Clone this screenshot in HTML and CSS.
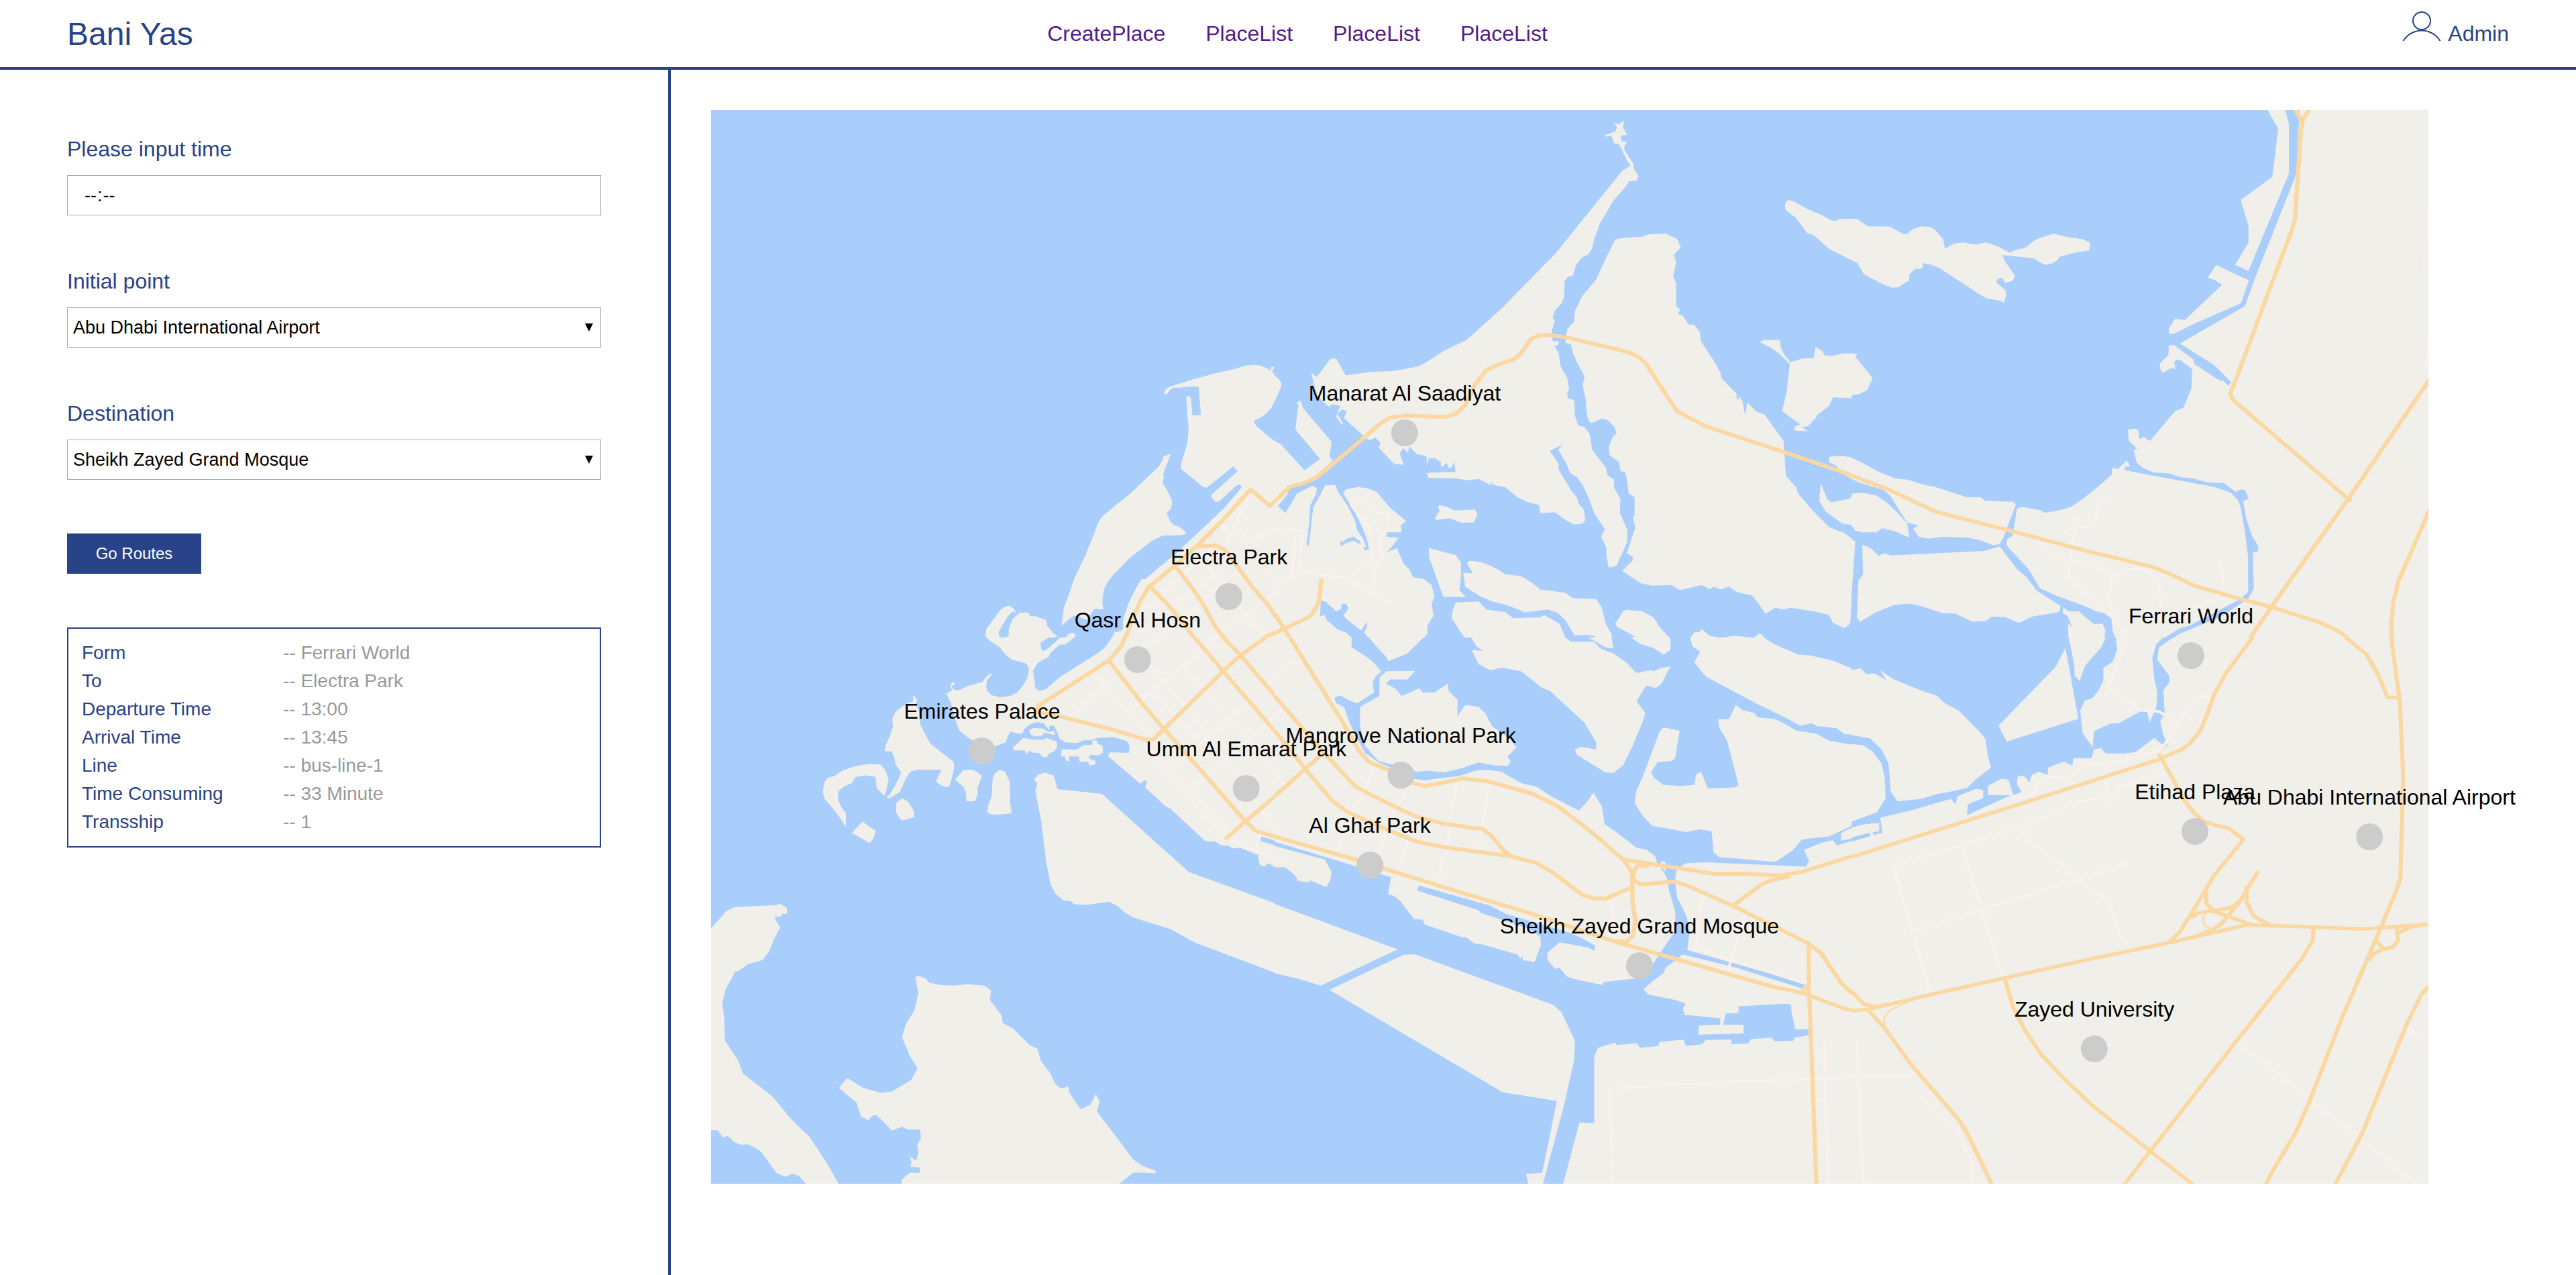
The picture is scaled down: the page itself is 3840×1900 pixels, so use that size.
FILE: index.html
```html
<!DOCTYPE html>
<html lang="en">
<head>
<meta charset="utf-8">
<meta name="viewport" content="width=device-width, initial-scale=1">
<title>Bani Yas</title>
<link rel="stylesheet" href="styles.css">
</head>
<body>
<header class="topbar">
  <h1 class="brand">Bani Yas</h1>
  <nav class="nav">
    <a href="#create">CreatePlace</a>
    <a href="#list">PlaceList</a>
    <a href="#list">PlaceList</a>
    <a href="#list">PlaceList</a>
  </nav>
  <a class="account" href="#admin">
    <svg class="account-icon" viewBox="0 0 60 44" aria-hidden="true"><circle cx="30" cy="14" r="13"/><path d="M2 45A32 32 0 0 1 58 45"/></svg>
    <span>Admin</span>
  </a>
</header>

<main class="layout">
  <section class="sidebar">
    <form class="form">
      <div class="field">
        <label for="time">Please input time</label>
        <input class="control time" id="time" type="time">
      </div>
      <div class="field">
        <label for="from">Initial point</label>
        <div class="select">
          <select class="control" id="from">
            <option>Abu Dhabi International Airport</option>
            <option>Ferrari World</option>
            <option>Electra Park</option>
          </select>
        </div>
      </div>
      <div class="field">
        <label for="to">Destination</label>
        <div class="select">
          <select class="control" id="to">
            <option>Sheikh Zayed Grand Mosque</option>
            <option>Ferrari World</option>
            <option>Electra Park</option>
          </select>
        </div>
      </div>
      <button class="go" type="button">Go Routes</button>
    </form>
    <dl class="result">
      <dt>Form</dt><dd>-- Ferrari World</dd>
      <dt>To</dt><dd>-- Electra Park</dd>
      <dt>Departure Time</dt><dd>-- 13:00</dd>
      <dt>Arrival Time</dt><dd>-- 13:45</dd>
      <dt>Line</dt><dd>-- bus-line-1</dd>
      <dt>Time Consuming</dt><dd>-- 33 Minute</dd>
      <dt>Transship</dt><dd>-- 1</dd>
    </dl>
  </section>

  <section class="map-pane">
    <div class="map">
      <svg class="map-art" viewBox="0 0 2560 1600" role="img" aria-label="Map of Abu Dhabi">
        <rect class="water" width="2560" height="1600"/>

        <!-- north-west tile -->
        <svg x="-20" y="-14" width="900" height="820" viewBox="0 0 1568 1568" preserveAspectRatio="none">
          <rect class="water" width="1568" height="1568"/>
          <g class="land">
            <path d="M1216 822L1228 814L1290 793L1345 777L1390 766L1425 755L1447 753L1462 755L1480 764L1488 768L1489 760L1495 757L1498 761L1492 768L1494 776L1508 790L1517 803L1515 816L1508 834L1500 852L1490 875L1475 893L1462 903L1448 910L1445 915L1450 926L1480 954L1508 978L1515 981L1540 1010L1568 1044V1568H1046L1060 1552L1075 1532L1083 1515L1097 1512L1105 1505L1104 1485L1110 1460L1120 1430L1138 1390L1152 1364L1163 1363L1195 1333L1240 1293L1268 1263L1330 1200L1370 1158L1410 1106L1413 1101L1408 1094L1400 1096L1354 1142L1344 1143L1334 1130L1335 1122L1402 1056L1391 1042L1322 1103L1313 1101L1256 1050L1254 1042L1262 1010L1272 975L1275 935L1271 885L1269 845L1275 841L1281 847L1285 897L1307 896L1301 816L1286 814L1250 818L1235 818L1228 823L1218 837L1212 836L1212 831Z"/>
            <path d="M1229 1006L1210 1014L1206 1027L1197 1043L1165 1076L1125 1118L1060 1176L1050 1186L1040 1202L1029 1236L1005 1300L978 1362L965 1405L951 1445L945 1497L965 1477L975 1469L985 1468L1010 1480L1030 1448L1048 1450L1054 1447L1051 1435L1052 1412L1057 1388L1066 1370L1080 1350L1095 1334L1120 1305L1155 1275L1182 1253L1208 1239L1255 1238L1265 1236L1269 1231L1262 1224L1250 1214L1235 1208L1226 1195L1218 1175L1229 1163L1232 1150L1231 1138L1220 1112L1208 1090L1208 1082L1211 1072L1209 1063Z"/>
            <path d="M828 1460L820 1446L808 1439L795 1443L785 1453L772 1472L750 1505L747 1520L750 1535L760 1548L780 1558L788 1568H895L890 1558L893 1550L915 1532L934 1527L922 1515L908 1497L905 1480L880 1470L862 1468L860 1460L850 1458L835 1460L818 1477L808 1505L808 1522L804 1528L790 1531L782 1525L782 1513L795 1488L805 1470L818 1455Z"/>
            <path d="M915 1568L930 1558L940 1533L942 1545L967 1517L980 1518L982 1525L965 1552L955 1556L950 1550L935 1568Z"/>
          </g>
          <g class="street">
            <path d="M1436 1118L1388 1225L1360 1275M1353 1207L1400 1235L1440 1285L1510 1385M1403 1215L1440 1255L1470 1232L1500 1222L1568 1224M1555 1225L1545 1350M1310 1300L1360 1385L1475 1532M1172 1445L1340 1270M1150 1515L1400 1300M1165 1560L1410 1335M1300 1568L1568 1345M1112 1530L1140 1568"/>
          </g>
          <g class="road">
            <path d="M1090 1568L1108 1540L1125 1490L1150 1425L1172 1385L1240 1325L1300 1265L1360 1200L1436 1108L1486 1155L1530 1110L1545 1095L1568 1091M1283 1278L1300 1271L1345 1267L1370 1280L1400 1325L1440 1385L1480 1435L1520 1500L1555 1568M1240 1325L1275 1375L1310 1430L1345 1500L1395 1568M1175 1385L1220 1435L1255 1480L1315 1568M1415 1568L1475 1528L1568 1480"/>
          </g>
        </svg>

        <!-- north tile -->
        <svg x="840" y="-14" width="900" height="820" viewBox="0 0 1568 1568" preserveAspectRatio="none">
          <rect class="water" width="1568" height="1568"/>
          <g class="land">
            <path d="M0 783L10 792L18 805L17 815L0 857Z"/>
            <path d="M0 970L15 978L78 1053L118 1021L54 937L62 866L57 860L68 855L73 875L148 972L143 1015L152 1025L105 1070L75 1085L30 1100L35 1120L9 1155L28 1175L58 1120L98 1097L110 1105L108 1120L92 1155L90 1200L83 1265L88 1270L92 1240L100 1160L130 1100L132 1095L158 1095L165 1115L190 1155L210 1200L215 1225L230 1248L238 1272L225 1272L222 1255L205 1242L188 1248L175 1258L170 1252L172 1270L182 1262L205 1254L225 1265L235 1282L245 1278L240 1250L225 1210L205 1165L178 1120L185 1108L215 1101L240 1104L265 1115L300 1160L342 1198L328 1210L330 1230L290 1230L292 1243L322 1245L305 1270L290 1287L318 1275L335 1320L350 1335L360 1358L385 1362L408 1380L415 1410L408 1435L413 1468L397 1495L397 1520L360 1560L350 1568H0Z"/>
            <path d="M858 98L868 94L885 88L889 75L880 62L893 68L908 57L905 75L915 97L898 100L903 118L915 115L907 137L932 180L932 192L945 215L940 228L920 230L912 245L880 285L845 350L830 395L825 420L815 438L798 447L782 470L775 498L762 502L753 515L752 560L745 578L728 598L722 618L728 628L720 655L722 685L738 685L737 695L727 700L738 720L742 755L760 790L765 820L760 835L762 848L778 853L780 897L788 925L805 930L818 950L825 995L860 1045L865 1068L882 1080L880 1098L898 1135L897 1175L917 1225L915 1260L888 1325L868 1331L862 1300L862 1275L848 1243L858 1222L830 1175L815 1130L800 1095L785 1072L768 1062L758 1035L737 995L748 980L715 998L738 1035L737 1050L770 1110L785 1130L790 1150L803 1165L807 1195L800 1205L780 1208L760 1198L728 1173L690 1175L687 1152L660 1145L630 1130L600 1102L570 1095L560 1083L566 1096L555 1092L530 1078L500 1082L470 1076L400 1075L395 1062L405 1060L470 1058L466 1028L460 1045L452 1047L448 1033L432 1045V1030L415 1018L400 1020L395 1040V1015L385 1010L370 1008L350 985L346 1004L335 990L325 1005L335 1038L310 1035L270 988L275 975L262 960L245 968L228 952L180 905L188 885L175 880L163 892L178 920L175 925L160 900L170 870L150 865L140 872L110 840L95 775L110 788L145 735L160 735L185 783L250 773L310 770L370 758L390 748L440 713L497 683L590 592L730 435L785 360L903 200L925 185L915 170L895 125L882 122L875 100L858 103Z"/>
            <path d="M885 395L915 390L955 388L970 381L1015 379L1045 393L1055 418L1037 440L1043 460L1035 500L1043 520L1043 585L1053 595L1048 608L1060 612L1075 638L1090 638L1105 660L1107 685L1140 740L1158 775L1160 790L1200 835L1200 850L1207 852L1205 840L1215 855L1222 897L1228 860L1250 885L1273 895L1322 970L1328 1070L1355 1102L1360 1120L1395 1165L1440 1215L1480 1232L1508 1256L1495 1490L1480 1503L1450 1488L1440 1465L1400 1455L1340 1445L1320 1450L1300 1445L1275 1462L1255 1430L1240 1410L1200 1400L1180 1385L1160 1393L1140 1385L1130 1392L1110 1380L1080 1388L1053 1395L1030 1380L980 1382L950 1375L903 1340L930 1310L930 1300L915 1290L937 1215L930 1187L935 1182L935 1130L920 1120L912 1060L898 1055L895 1030L870 1010L868 985L880 955L888 950L883 930L865 910L850 906L820 920L812 900L808 850L800 812L805 785L785 745L775 720L770 695L755 690L760 650L778 630L780 600L800 555L835 510L860 450Z"/>
            <path d="M428 1153L440 1155L470 1168L520 1165L527 1178L518 1202L485 1203L455 1190L420 1195L416 1190L428 1170L424 1157Z"/>
            <path d="M401 1275L470 1295L484 1315L484 1355L480 1395L497 1414L438 1414L401 1300Z"/>
            <path d="M500 1318L505 1312L520 1312L545 1318L575 1333L600 1350L640 1355L670 1375L690 1393L755 1402L775 1418L835 1420L850 1445L860 1490L875 1520L880 1565L860 1558L830 1525L795 1522L780 1525L755 1480L735 1460L710 1450L650 1458L610 1440L560 1425L530 1410L495 1385L490 1345L515 1347Z"/>
            <path d="M470 1430L530 1427L550 1450L600 1458L620 1475L690 1472L700 1466L740 1490L755 1530L770 1545L815 1540L860 1568H525L515 1555L490 1525L460 1475L462 1455Z"/>
            <path d="M885 1490L905 1455L915 1451L955 1455L985 1473L1000 1500L1028 1533V1568H980L960 1545L925 1520L890 1500Z"/>
            <path d="M1080 1530L1090 1515L1102 1515L1110 1507L1130 1525L1160 1530L1195 1525L1245 1530L1260 1517L1300 1555L1335 1568H1080Z"/>
            <path d="M1328 288L1335 283L1350 288L1385 310L1420 325L1445 341L1455 343L1470 337L1515 338L1540 357L1568 358V517L1532 498L1513 463L1440 422L1400 383L1383 377L1355 335L1328 312L1325 300Z"/>
            <path d="M1260 688L1270 682L1312 682L1315 705L1325 725L1340 745L1370 735L1400 733L1405 702L1422 713L1428 725L1450 728L1475 720L1500 720L1515 727L1510 732L1552 790L1540 825L1500 848L1450 845L1440 870L1410 895L1405 905L1385 928L1370 930L1385 942L1350 940L1350 930L1365 922L1318 885L1330 830L1338 750L1310 720L1290 705Z"/>
            <path d="M1440 1015L1470 1012L1510 1018L1568 1045V1105L1510 1085L1465 1057L1462 1042L1440 1030Z"/>
            <path d="M1418 1090L1435 1135L1445 1145L1490 1135L1525 1117L1568 1127V1230L1540 1230L1515 1212L1475 1205L1430 1170L1415 1140Z"/>
            <path d="M1527 1268L1568 1300V1455L1530 1470L1518 1485L1513 1475L1518 1370L1528 1355Z"/>
          </g>
          <path class="water" d="M120 1425L132 1427L160 1455L172 1450L175 1435L185 1433L192 1445L185 1460L178 1465L190 1480L225 1510L240 1485L240 1500L232 1515L272 1568H215L200 1530L185 1515L165 1508L135 1480L130 1465L118 1470Z"/>
          <g class="street">
            <path d="M0 1222L75 1225L60 1345M55 1225L45 1350M0 1390L65 1342L180 1358L260 1410L295 1427M190 1365L250 1305L255 1260L245 1215L200 1155L202 1135L212 1130L230 1137L270 1175L290 1180L297 1190L295 1215L272 1250L278 1300L258 1335L258 1410M0 1368L10 1388"/>
          </g>
          <g class="road">
            <path d="M0 1142L40 1100L75 1090L110 1073L190 1000L275 920L300 903L345 897L440 902L470 893L495 868L520 810L550 768L585 750L620 738L640 720L665 680L685 670L710 667L760 675L920 717L945 730L965 750L1000 810L1045 885L1120 928L1300 993L1480 1060L1568 1100M122 1362L115 1430L95 1468L0 1518M0 1462L25 1505L60 1568"/>
          </g>
        </svg>

        <!-- north-east tile -->
        <svg x="1700" y="-14" width="900" height="820" viewBox="0 0 1568 1568" preserveAspectRatio="none">
          <rect class="water" width="1568" height="1568"/>
          <g class="land">
            <path d="M0 337L15 337L42 358L100 359L135 380L145 380L158 367L180 358L205 360L217 368L238 395L243 422L265 408L290 404L320 410L350 404L380 415L410 433L430 424L450 420L480 395L525 379L560 388L600 395L620 405L617 427L580 433L540 445L535 455L520 464L505 468L490 462L475 450L392 440L400 460L424 498L420 512L400 520L392 505L380 508L376 518L400 540L402 555L396 576L385 570L350 563L330 550L230 478L205 467L185 463L185 478L165 480L150 495L150 512L120 532L105 533L85 525L32 495L15 462L0 455Z"/>
            <path d="M0 720L15 722L10 730L55 790L45 815L40 825L20 836L0 840Z"/>
            <path d="M0 1018L25 1030L70 1057L115 1077L145 1080L190 1095L215 1100L300 1130L335 1130L347 1140L420 1143L427 1150L395 1245L385 1264L368 1267L335 1253L300 1245L235 1243L200 1248L175 1243L160 1220L175 1210L145 1203L100 1125L85 1110L20 1088L0 1078Z"/>
            <path d="M0 1120L30 1117L65 1125L97 1150L120 1175L145 1205L150 1245L115 1228L80 1218L65 1230L30 1230L10 1225L0 1210Z"/>
            <path d="M0 1250L10 1256L0 1410Z"/>
            <path d="M28 1266L50 1275L70 1297L85 1290L103 1296L345 1283L385 1270L430 1335L455 1358L480 1395L543 1440L540 1457L470 1470L435 1488L400 1472L365 1470L350 1482L315 1485L270 1462L235 1460L180 1440L150 1433L110 1437L60 1460L22 1485L14 1473L18 1368L30 1350Z"/>
            <path d="M430 1162L445 1158L490 1167L500 1174L530 1170L570 1158L600 1136L640 1100L675 1067L678 1046L692 1050L715 1025L724 1042L710 1043L710 1053L780 1068L940 1100L985 1117L1005 1140L1012 1165L1022 1230L1030 1300V1400L1010 1420L880 1495L850 1505L800 1540L785 1550L782 1568H690L682 1550L685 1530L678 1510L675 1475L655 1460L635 1455L605 1440L530 1410L490 1390L460 1335L403 1268V1250L418 1240Z"/>
            <path d="M1165 0L1155 210L1050 500L1022 585L853 692L940 752L987 803L978 812L965 798L955 797L890 750L888 737L838 697L824 697L823 725L800 750L803 768L810 775L830 762L842 765L838 745L845 737L855 740L885 765L883 820L862 875L840 885L775 970L757 957L755 963L747 963L745 940L735 934L718 938L720 968L742 993L733 995L740 1030L755 1045L785 1060L825 1062L855 1073L885 1076L925 1088L968 1090L997 1115L1012 1107L1022 1110L1032 1135L1017 1140L1025 1190L1040 1240L1057 1270L1055 1285L1042 1287L1045 1390L1030 1420L960 1470L850 1520L805 1555L800 1568H1568V0Z"/>
            <path d="M1065 0L1080 25L1108 80L1093 217L1011 283L1031 357V405L996 468L1031 485L1136 208V65L1120 0Z"/>
            <path d="M947 468L1032 512L1012 577L885 638L840 663L825 665L824 650L840 622L866 625L962 525L945 512L925 505Z"/>
            <path d="M550 1443L565 1455L590 1455L630 1492L652 1490L660 1510L655 1540L630 1568H565L562 1490L573 1500L562 1470L548 1460Z"/>
          </g>
          <g class="street">
            <path d="M475 1245L505 1285L565 1315L600 1314L640 1325L665 1345L680 1367M578 1187L582 1215L565 1315L565 1355L680 1475L712 1525L702 1568M547 1228L583 1215L630 1215L645 1140L655 1130L672 1130M685 1490L668 1420L675 1370L695 1348L720 1335L755 1334L778 1348L798 1380L805 1450M960 1312L965 1370L950 1412L885 1452M1498 300L1487 480H1510M1498 670L1490 768"/>
          </g>
          <g class="road">
            <path d="M0 1068L100 1110L220 1172L400 1222L600 1280L780 1328L820 1345L890 1382L1010 1420L1090 1443L1220 1488L1270 1515L1330 1568M1140 0L1170 60L1202 0M1170 60L1165 120L1152 335L1145 365L1085 540L1000 790L983 835L990 852L1298 1142M1510 780L1290 1135L1090 1443L1012 1568M1510 1143L1420 1370L1407 1430L1402 1490L1405 1568"/>
          </g>
        </svg>

        <!-- south-west tile -->
        <svg x="-20" y="786" width="900" height="830" viewBox="0 0 1568 1568" preserveAspectRatio="none">
          <rect class="water" width="1568" height="1568"/>
          <g class="land">
            <path d="M750 0L762 12L785 28L800 48L815 62L850 72L859 82L860 95L857 112L845 135L830 155L812 165L785 168L762 162L752 150L749 135L752 120L764 105L762 101L752 107L740 125L700 137L680 148L667 148L659 140L668 130L667 126L660 128L656 138L661 148L646 158L658 185L670 235L680 262L700 280L730 300L770 307L800 295L805 280L812 265L822 268L832 271L843 270L850 255L862 245L880 238L900 242L904 250L915 262L912 250L925 248L932 262L940 285L955 295L985 297L1000 290L1025 288L1038 283L1080 280L1115 292L1122 305L1120 325L1070 323L1066 335L1150 412L1160 402L1167 405L1162 422L1215 475L1228 482L1318 573L1345 575L1360 585L1378 586L1390 594L1408 592L1455 612L1460 640L1472 645L1482 635L1508 652L1530 650L1555 680L1568 678V0H1076L1060 25L1042 42L940 112L905 145L888 150L877 143L875 120L871 95L875 85L885 70L905 58L912 55L915 45L940 20L955 20L978 0Z"/>
            <path d="M820 318L819 310L845 283L870 287L900 288L905 283L932 292L934 308L926 320L912 327L907 337L895 336L887 325L872 325L862 318L855 328L848 318Z"/>
            <path d="M861 262L870 255L895 256L912 266L926 262L928 275L900 268L895 276L880 279L865 274Z"/>
            <path d="M945 315L985 315L1002 303L1025 302V290H1037V298L1052 305V325L1040 332L1020 330L1015 340L1034 348L1032 358L1018 360L1014 350L992 350L990 335L965 335L964 348L956 347L954 335L944 335Z"/>
            <path d="M559 162L570 175L567 185L575 210L578 245L590 270L605 300L635 325L665 350L666 370L655 415L648 422L630 415L619 405L633 372L600 372L570 372L552 378L540 398L525 435L500 452L490 452L505 432L518 405L529 380L515 360L510 335L503 320L485 320L490 300L500 275L508 250L505 232L512 212L530 195L545 185L560 180Z"/>
            <path d="M385 534L368 505L350 480L330 455L325 435L330 405L338 395L355 390L375 375L410 362L445 356L475 358L487 372L496 400L490 430L485 445L465 425L462 392L435 388L410 393L400 410L380 420L366 432L364 455L372 475L385 495Z"/>
            <path d="M400 550L428 518L445 532L462 543L457 565L447 579L430 568Z"/>
            <path d="M515 490L516 465L530 453L545 460L560 485L563 505L545 512L530 515L522 505Z"/>
            <path d="M668 400L690 373L715 372L738 388L735 400L726 425L728 440L720 461L698 461L697 435L690 420Z"/>
            <path d="M785 372L798 378L810 405L812 470L816 495L800 497L765 499L752 492L754 475L764 445L766 400L772 382Z"/>
            <path d="M873 400L885 386L903 380L915 386L924 387L935 427L1050 440L1275 660L1568 775V961L1495 942L1290 858L1228 821L1130 788L1108 773L1092 757L1068 744L1040 748L1010 753L978 751L970 743L950 740L930 722L916 695L905 630L897 560L893 520L877 432L882 410Z"/>
            <path d="M30 825L75 770L95 760L130 757L200 754L215 750L232 762V778L220 778L215 786L200 785L205 800L215 815L200 845L185 885L168 908L130 920L105 940L98 940L72 992L64 1030L69 1070L71 1135L105 1190L118 1228L150 1255L195 1293L240 1352L265 1380L290 1405L333 1475L367 1540L367 1568L300 1568L283 1540L262 1515L245 1510L228 1518L205 1508L190 1485L165 1448L150 1437L130 1427L112 1428L95 1420L78 1403L65 1407L52 1387H30Z"/>
            <path d="M565 955L575 953L592 960L602 972L630 978L665 980L700 976L745 980L762 994L759 1020L790 1065L792 1085L820 1102L863 1148L882 1157L892 1193L915 1225L930 1258L945 1270L963 1263L965 1282L995 1328L1020 1315L1034 1285L1044 1305L1037 1335L1080 1395L1130 1468L1155 1488L1188 1500L1190 1508L1132 1506L1095 1538V1568H530V1527L550 1507H578L577 1492L553 1490L555 1475L550 1460L568 1473L573 1450L570 1430L580 1408L577 1385L545 1385L530 1377L505 1388L465 1345L455 1345L443 1359L424 1349L413 1310L367 1268L388 1240L430 1268L475 1282L505 1278L555 1245L571 1213L550 1176L531 1125L540 1090L563 1050L573 1000Z"/>
          </g>
          <path class="water" d="M892 30L890 15L912 0H940L930 12L905 35L895 38ZM1464 560L1568 595V608L1462 573Z"/>
          <g class="street">
            <path d="M1022 95L1165 270M1160 310L1370 565L1555 648M965 228L1105 85L1195 0M1120 210L1345 0M1175 80L1300 235L1510 555M1255 75L1430 285L1525 415M1180 150L1300 290M1215 385L1430 180M1265 445L1520 200M1475 135L1540 75L1568 70M1462 550L1448 600M1110 0L1180 85M1180 320L1385 548"/>
          </g>
          <g class="road">
            <path d="M1110 0L1100 25L1068 65L885 192L880 210L940 222L1080 260L1165 288L1182 288L1365 95L1410 50L1475 0M1068 65L1150 180L1205 250L1320 390L1420 515L1450 545L1568 580M1290 0L1365 95L1480 240L1568 350M1365 0L1410 50L1500 165L1568 245M1540 0L1568 50M1370 568L1420 520L1568 385"/>
          </g>
        </svg>

        <!-- south tile -->
        <svg x="840" y="786" width="900" height="830" viewBox="0 0 1568 1568" preserveAspectRatio="none">
          <rect class="water" width="1568" height="1568"/>
          <g class="land">
            <path d="M0 0H200L200 28L240 55L258 72L277 95L262 110L255 125L258 155L215 185L200 180L170 163L155 170L160 185L180 195L195 240L215 285L235 325L270 352L300 365L362 398L390 402L440 395L480 390L520 375L550 372L590 378L600 385L640 410L680 420L720 448L790 487L810 465L828 437L850 475L857 525L890 550L940 592L965 597L988 615L995 640L1010 660L1020 680L1025 715L1040 770L1042 825L1025 850L985 915L935 960L855 970L850 978L780 962L760 955L740 930L728 933L710 910L708 888L740 858L815 873L830 882L834 868L800 848L770 832L600 778L560 755L375 698L370 712L530 768L535 775L660 820L690 842L692 865L675 914L645 908L643 895L640 906L630 892L535 863L520 862L495 842L490 845L390 808L385 795L362 792L325 740L310 728L295 723L302 675L215 645L0 575Z"/>
            <path d="M0 587L130 625L148 660L145 680L135 703L90 683L90 690L60 685L55 672L28 647L0 647Z"/>
            <path d="M272 165L273 112L290 95L365 94L345 118L300 118L290 130L315 145L330 165L375 143L385 155L415 155L450 130L452 150L475 175L475 222L495 190L530 195L548 215L565 250L610 285L628 310L605 335L613 350L605 362L570 360L530 352L480 370L440 380L400 375L370 378L330 365L270 348L235 305L222 250L222 195Z"/>
            <path d="M245 0H387L345 45L295 67L290 55L262 22Z"/>
            <path d="M510 0H755L770 12L830 12L845 30L880 45L915 72L940 100L975 92L985 95L1005 85L1028 82L1005 130L990 142L965 135L940 180L963 212L955 240L930 305L905 360L880 381L860 380L785 330L780 315L795 308L835 315V295L805 240L770 205L715 150L695 142L640 95L590 85L560 92L530 75L512 35L540 38L525 25Z"/>
            <path d="M815 0H875L880 30L860 28Z"/>
            <path d="M925 0H1028V35L1010 48L985 30L950 18Z"/>
            <path d="M1080 0H1270L1300 20L1360 48L1390 50L1450 65L1510 92L1535 92L1540 105L1568 107V310L1520 275L1480 272L1460 255L1410 250L1395 242L1365 248L1325 225L1250 185L1120 110L1090 70L1105 40L1085 25Z"/>
            <path d="M1198 190L1215 205L1245 212L1255 225L1300 230L1320 240L1355 262L1405 270L1440 290L1515 305L1545 325L1568 345V490L1540 502L1520 520L1490 535L1440 560L1370 568L1345 600L1300 632L1155 618L1140 605L1135 545L1105 540L1070 548L980 530L955 500L935 465L940 430L955 395L1000 265L1010 253L1052 262L1040 340L1030 348L995 350L978 380L985 395L1010 415L1055 418L1090 415L1095 385L1108 378L1125 425L1195 422L1205 415L1175 290L1155 255L1152 230L1180 230Z"/>
            <path d="M1045 650L1070 635L1120 633L1380 645L1388 630L1375 598L1420 578L1450 570L1460 585L1545 558L1470 572L1472 550L1490 540L1568 522V1568H742L792 1365L830 1368V1180L840 1155L885 1140L888 1147L940 1142L950 1155L997 1150L1000 1138L1062 1132L1068 1150L1110 1145L1120 1133L1185 1132L1188 1145L1230 1143L1238 1130L1290 1127L1300 1137L1348 1135L1350 1127L1388 1120L1388 1103L1352 1103L1342 1050V1035L1330 1031L1205 1038V1057L1172 1058L1165 1090L1218 1090V1115L1100 1118L1102 1092L1157 1090L1158 1072L1065 1062L1060 1045L1068 1030L1040 1020L970 1005L958 990L985 965L1010 945L1015 930L1060 892L1200 930L1370 988L1380 975L1072 880L1078 825L1070 785L1045 730L1040 680Z"/>
            <path d="M0 750L320 878L120 980L60 960L0 945Z"/>
            <path d="M142 992L335 893L365 892L725 1035L745 1055L780 1135L778 1190L750 1325L697 1538L690 1568H665L653 1510L695 1507L733 1305L592 1280Z"/>
            <path d="M1005 628L1015 632V660L1008 650H998Z"/>
          </g>
          <g class="street">
            <path d="M0 110L45 70H80M0 218L22 198M0 375L28 418M258 365L158 610M350 410L312 485L265 620M370 505L320 660M473 403L447 595L432 630L428 702M557 405L530 603M872 740L880 770V830L862 840M1113 720L1092 875L1380 975M1222 780L1175 945M878 1538L870 1270L1150 1252L1568 1237M1427 1138L1437 1538M1514 1138L1527 1538M1405 1298H1430M1405 1410H1435M0 620L55 645"/>
          </g>
          <g class="road">
            <path d="M40 0L80 70L175 235L220 320L245 350L300 375L350 408L390 418L430 410L490 397L555 405L670 440L735 475L820 545L905 625L925 655L935 685L950 695L1040 687L1070 698L1190 755L1385 860L1420 890L1470 970L1530 1035L1568 1045M905 625L1140 665L1220 665L1310 670L1370 660L1568 592M0 165L120 315L210 420L300 470L370 505L430 522L520 537L540 538L565 560L595 600L610 612M0 262L80 370L150 460L190 492L300 545L370 575L450 592L610 615L680 635L720 660L800 725L830 735L860 735L935 700M0 447L130 322M0 560L210 625L430 700L660 775L880 855L1300 985L1370 1000L1480 1045L1510 1050L1568 1040M1387 865L1388 975L1370 1000M1388 985L1408 1568M880 855L915 855L930 840L937 800L930 745L928 675L940 645L975 640M1190 755L1265 695L1290 683L1340 672M1530 1035L1568 1080"/>
          </g>
        </svg>

        <!-- south-east tile -->
        <svg x="1700" y="786" width="1080" height="950" viewBox="0 0 1568 1568" preserveAspectRatio="none">
          <rect class="ground" width="1568" height="1568"/>
          <path class="water" d="M0 0H470L482 65L483 95L494 107L505 70L540 25L550 0H572L575 30L565 60L545 75V105L535 130L520 150L505 155L495 180L500 235L522 270L525 230L560 212L580 210L625 182L640 183L645 210L660 170L662 135L655 100L651 50L660 15L675 0H696L665 25L662 55L688 95V110L675 130L678 190L668 205L675 240L685 262L680 270L655 247L615 282L590 285L550 285L540 272L525 275L520 297H480L478 315L460 305L425 320V338L405 330L390 338L385 357L375 342L360 340L358 360L368 380L350 388L340 350L325 347L295 365V388L345 388L250 437L252 410L285 395V375L270 372L230 390L225 410L215 397L130 425L62 443L67 480L0 502Z"/>
          <g class="land">
            <path d="M0 80L20 76L32 90L50 88L75 105L62 80L90 102L150 130L185 143L200 160L232 180L280 235L290 250L295 290L302 320L270 348L250 370L210 380L185 385L150 397L100 403L85 380L80 310L65 275L40 248L0 240Z"/>
            <path d="M0 262L25 265L45 280L65 310L72 345L74 395L55 430L0 453Z"/>
            <path d="M0 468L25 460L60 456V476L45 480L50 487L40 488V480L0 492Z"/>
            <path d="M463 25L491 200L336 256L318 217L442 72Z"/>
          </g>
          <g class="street">
            <path d="M597 0L555 125L625 178L665 182L710 212M780 145L745 147L680 260L660 282L550 312H505L465 350L440 342L410 347L395 380L380 392L350 395M550 312L553 395L562 412M690 330L580 368L572 382L470 412L425 440L355 470L90 562L168 860L160 880M238 510L328 838M355 470L558 655L585 745M135 722L600 555M0 1083L130 1077L150 1070M12 995L25 1345M148 1127L232 1215L260 1290V1345L290 1318M835 993L1225 1345M1195 952L1260 1010"/>
          </g>
          <g class="road road-se">
            <path d="M0 540L350 415L665 300L715 275L735 258L755 228L770 190L785 140L810 88L868 0M665 285L720 400L740 430L760 450L790 463L815 468L848 497L785 585L735 680L710 725L685 752M1070 0L1115 42L1140 92L1160 147L1185 148M1168 0L1187 160L1194 340L1188 590L1180 620L1145 715L1060 940L990 1145L960 1220L905 1325L890 1360M0 918L35 915L165 880L330 838L520 790L690 750L855 707L1000 712L1110 717L1260 704M0 870L25 900L50 908L80 902M35 915L75 965L125 1045L235 1190L255 1230L310 1360M332 840L350 910L375 965L410 1025L460 1085L520 1150L755 1360M1000 712L998 745L975 790L835 990L580 1360M1260 845L1235 875L1200 955L1105 1220L1040 1360M880 575L840 650L800 705L775 722L750 732M855 610V650L870 685L905 707M735 690L750 677L780 672L825 690L870 708M768 625V655L785 672L820 665L845 645M1180 715L1183 745L1172 762L1150 767L1130 778L1118 795M1135 745L1150 765M1185 725L1210 712L1249 705"/>
          </g>
          <path class="ramp" d="M155 885L120 897L85 915L70 935L72 962M770 675L760 690L765 710L775 715"/>
        </svg>
      </svg>

      <ul class="places">
        <li class="place" style="left:40.39%;top:30.06%">Manarat Al Saadiyat</li>
        <li class="place" style="left:30.16%;top:45.31%">Electra Park</li>
        <li class="place" style="left:24.84%;top:51.19%">Qasr Al Hosn</li>
        <li class="place" style="left:15.78%;top:59.69%">Emirates Palace</li>
        <li class="place" style="left:31.17%;top:63.19%">Umm Al Emarat Park</li>
        <li class="place" style="left:40.16%;top:61.94%">Mangrove National Park</li>
        <li class="place" style="left:38.36%;top:70.31%">Al Ghaf Park</li>
        <li class="place" style="left:54.06%;top:79.69%">Sheikh Zayed Grand Mosque</li>
        <li class="place" style="left:86.17%;top:50.81%">Ferrari World</li>
        <li class="place" style="left:86.41%;top:67.19%">Etihad Plaza</li>
        <li class="place" style="left:96.56%;top:67.69%">Abu Dhabi International Airport</li>
        <li class="place" style="left:80.55%;top:87.44%">Zayed University</li>
      </ul>
    </div>
  </section>
</main>
</body>
</html>
```
FILE: styles.css
```css
* { box-sizing: border-box; }

:root {
  --navy: #284387;
  --line: 4px solid var(--navy);
}

body {
  margin: 0;
  min-height: 100vh;
  display: flex;
  flex-direction: column;
  background: #fff;
  color: var(--navy);
  font: 32px/37px "Liberation Sans", Arial, sans-serif;
}

/* top bar */
.topbar {
  display: flex;
  align-items: center;
  justify-content: space-between;
  height: 104px;
  padding: 0 100px;
  border-bottom: var(--line);
}
.brand {
  margin: 0;
  font-size: 48px;
  line-height: 55px;
  font-weight: 400;
}
.nav { display: flex; gap: 60px; }
.nav a { color: #551a8b; text-decoration: none; }
.account {
  display: flex;
  align-items: baseline;
  gap: 9px;
  color: inherit;
  text-decoration: none;
}
.account-icon {
  width: 60px;
  height: 44px;
  margin-top: -15px;
  fill: none;
  stroke: var(--navy);
  stroke-width: 2;
}

/* page body */
.layout {
  flex: 1;
  display: grid;
  grid-template-columns: minmax(320px, 1000px) minmax(0, 1fr);
}
.sidebar {
  padding: 100px;
  border-right: var(--line);
}
.form {
  display: flex;
  flex-direction: column;
  align-items: flex-start;
  gap: 80px;
  margin-bottom: 80px;
}
.field {
  display: flex;
  flex-direction: column;
  gap: 20px;
  width: 100%;
}
.control {
  display: block;
  width: 100%;
  height: 60px;
  border: 1px solid #a9a9a9;
  border-radius: 0;
  background: #fff;
  color: #000;
  font: 27px/32px "Liberation Sans", Arial, sans-serif;
  appearance: none;
}
select.control { padding: 0 40px 0 8px; }
.time { padding: 0 24px; }
.time::-webkit-calendar-picker-indicator { display: none; }
.time::-webkit-datetime-edit-ampm-field { display: none; }
.select { position: relative; }
.select::after {
  content: "";
  position: absolute;
  right: 12px;
  top: 24px;
  width: 12px;
  height: 12px;
  background: #000;
  clip-path: polygon(0 0, 100% 0, 50% 100%);
  pointer-events: none;
}
.go {
  width: 200px;
  height: 60px;
  border: 0;
  background: var(--navy);
  color: #fff;
  font: 24px/28px "Liberation Sans", Arial, sans-serif;
}
.result {
  display: grid;
  grid-template-columns: 300px 1fr;
  margin: 0;
  padding: 15px 20px;
  border: 2px solid var(--navy);
  font-size: 28px;
  line-height: 42px;
}
.result dd { margin: 0; color: #999; }

/* map */
.map-pane { padding: 60px; }
.map {
  position: relative;
  width: 100%;
  max-width: 2560px;
}
.map-art { display: block; width: 100%; height: auto; }
.water { fill: #a9cefc; }
.land, .ground { fill: #f0efe9; }
.street, .road, .ramp { fill: none; stroke-linejoin: round; }
.street { stroke: #f9f0ec; stroke-width: 7; }
.road { stroke: #fbd7a1; stroke-width: 11; }
.road-se { stroke-width: 9; }
.ramp { stroke: #fbd7a1; stroke-width: 3; }

.places { margin: 0; padding: 0; list-style: none; }
.place {
  position: absolute;
  display: flex;
  flex-direction: column;
  align-items: center;
  gap: 20px;
  color: #000;
  white-space: nowrap;
  transform: translate(-50%, calc(-100% + 20px));
}
.place::after {
  content: "";
  width: 40px;
  height: 40px;
  border-radius: 50%;
  background: #ccc;
}
```
